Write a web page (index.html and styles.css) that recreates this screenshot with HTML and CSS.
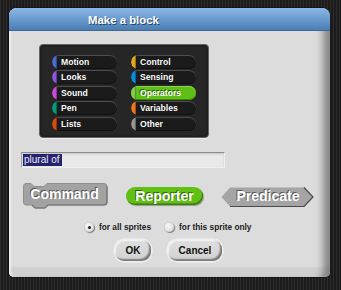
FILE: index.html
```html
<!DOCTYPE html>
<html>
<head>
<meta charset="utf-8">
<link rel="stylesheet" href="styles.css">
</head>
<body>
<div class="dialog">
  <div class="titlebar"><span class="title">Make a block</span></div>
  <div class="content">
    <div class="palette">
      <div class="cat"><span class="cap" style="background:#4a6cd4"></span>Motion</div>
      <div class="cat"><span class="cap" style="background:#e6a822"></span>Control</div>
      <div class="cat"><span class="cap" style="background:#8f56e3"></span>Looks</div>
      <div class="cat"><span class="cap" style="background:#0494dc"></span>Sensing</div>
      <div class="cat"><span class="cap" style="background:#cf4ad9"></span>Sound</div>
      <div class="cat selected"><span class="cap" style="background:#86cf4e"></span>Operators</div>
      <div class="cat"><span class="cap" style="background:#00a178"></span>Pen</div>
      <div class="cat"><span class="cap" style="background:#f3761d"></span>Variables</div>
      <div class="cat"><span class="cap" style="background:#d94d11"></span>Lists</div>
      <div class="cat"><span class="cap" style="background:#969696"></span>Other</div>
    </div>
    <div class="input"><span class="sel">plural of</span></div>
    <div class="types">
      <div class="shape command">
        <svg width="85" height="26" viewBox="0 0 85 26">
          <path d="M3,0.5 H8 L11,3.5 H21 L24,0.5 H81 Q84,0.5 84,3.5 V19 Q84,22 81,22 H25 L22,25 H12 L9,22 H3 Q0.5,22 0.5,19 V3.5 Q0.5,0.5 3,0.5 Z" fill="#a2a2a2" stroke="#8e8e8e" stroke-width="1"/>
          <path d="M84,3.5 V19 Q84,22 81,22 H25 L22,25 H12 L9,22" fill="none" stroke="#6f6f6f" stroke-width="1.2"/>
        </svg>
        <span class="shape-label">Command</span>
      </div>
      <div class="shape reporter"><span class="shape-label">Reporter</span></div>
      <div class="shape predicate">
        <svg width="93" height="20" viewBox="0 0 93 20">
          <path d="M9,0.5 H83 L92,10 L83,19.5 H9 L0.5,10 Z" fill="#a5a5a5"/>
          <path d="M83,0.5 L92,10 L83,19.5 H9" fill="none" stroke="#4a4a4a" stroke-width="1.2"/>
        </svg>
        <span class="shape-label">Predicate</span>
      </div>
    </div>
    <div class="radios">
      <div class="radio"><span class="dot on"></span><span class="rlabel">for all sprites</span></div>
      <div class="radio"><span class="dot"></span><span class="rlabel">for this sprite only</span></div>
    </div>
    <div class="buttons">
      <div class="btn ok"><span class="btn-in">OK</span></div>
      <div class="btn cancel"><span class="btn-in">Cancel</span></div>
    </div>
  </div>
</div>
</body>
</html>
```
FILE: styles.css
```css
html, body {
  margin: 0;
  padding: 0;
}
body {
  width: 341px;
  height: 290px;
  overflow: hidden;
  background: repeating-linear-gradient(90deg, #2c2c2c 0 1.5px, #1c1c1c 1.5px 3px);
  font-family: "Liberation Sans", Arial, sans-serif;
  padding: 8px 0 0 9px;
  box-sizing: border-box;
}
.dialog {
  width: 321px;
  height: 269px;
  border-radius: 8px 8px 5px 5px;
  background: #dcdcdc;
  box-shadow:
    inset 3px 0 2px -1px #efefef,
    inset -12px 0 7px -5px rgba(0,0,0,0.38),
    inset 0 -9px 0 -1px #d0d0d0,
    inset 0 -10px 3px -1px rgba(0,0,0,0.08),
    0 0 0 1px rgba(0,0,0,0.35);
  overflow: hidden;
  display: flex;
  flex-direction: column;
}
.titlebar {
  height: 23px;
  background: linear-gradient(#8ab7e4, #6a9bcf 50%, #4b7db3);
  border-bottom: 1px solid #3f6a98;
  box-sizing: border-box;
  display: flex;
  align-items: center;
  padding-left: 79px;
}
.title {
  color: #fff;
  font-weight: bold;
  font-size: 11.4px;
  text-shadow: 1px 1px 0 rgba(20, 40, 70, 0.75);
  margin-top: 1px;
}
.content {
  display: flex;
  flex-direction: column;
}
.palette {
  margin: 13px 0 0 30px;
  width: 170px;
  height: 94px;
  box-sizing: border-box;
  background: #262626;
  border: 1px solid #626262;
  border-radius: 4px;
  box-shadow: inset 0 0 3px rgba(0,0,0,0.6), 0 1px 1px rgba(255,255,255,0.5);
  padding: 9.5px 12px 0 12px;
  display: grid;
  grid-template-columns: 65px 65px;
  column-gap: 14px;
  row-gap: 1.6px;
  align-content: start;
}
.cat {
  height: 14px;
  border-radius: 7px;
  background: #1b1b1b;
  box-shadow: inset 0 1px 0 #4e4e4e, inset 0 -1px 0 #111;
  display: flex;
  align-items: center;
  color: #fff;
  font-weight: bold;
  font-size: 8.6px;
  text-shadow: -0.5px -0.5px 0 #000;
  overflow: hidden;
}
.cat .cap {
  width: 5px;
  height: 14px;
  border-radius: 5px 0 0 5px / 7px 0 0 7px;
  margin-right: 4px;
  flex: none;
  box-shadow: inset -1px 0 1px rgba(0,0,0,0.35);
}
.cat.selected {
  background: #5fbf17;
  box-shadow: inset 0 1px 0 #8ad655, inset 0 -1px 0 #3f8a0a;
  text-shadow: -1px -1px 0 #2a5a05;
}
.input {
  margin: 14px 0 0 12px;
  width: 204px;
  height: 16px;
  box-sizing: border-box;
  background: #e9e9e9;
  border-top: 1px solid #8c8c8c;
  border-left: 1px solid #a0a0a0;
  border-right: 1px solid #f0f0f0;
  border-bottom: 1px solid #f0f0f0;
  box-shadow: inset 0 1px 2px rgba(0,0,0,0.15);
  padding: 1px 0 0 1px;
  display: flex;
  align-items: flex-start;
}
.sel {
  background: #24246c;
  color: #e8e8ff;
  font-size: 10px;
  line-height: 12px;
  padding: 0 2px 0 1px;
}
.types {
  margin-top: 15px;
  padding-left: 14px;
  display: flex;
  align-items: flex-start;
  height: 26px;
}
.shape {
  position: relative;
  display: flex;
  align-items: center;
  justify-content: center;
  color: #fff;
  font-weight: bold;
  font-size: 14px;
  text-shadow: -1px -1px 0 rgba(0,0,0,0.5);
}
.shape svg {
  display: block;
}
.shape-label {
  position: absolute;
  left: 0;
  right: 0;
  text-align: center;
}
.command {
  width: 85px;
  height: 26px;
}
.command .shape-label {
  top: 3px;
  line-height: 17px;
  left: -2px;
}
.reporter {
  margin: 4px 0 0 18px;
  width: 77px;
  height: 18px;
  border-radius: 9px;
  background: #60c013;
  box-shadow: inset -1px -1.5px 0 #3a7d08, 1px 1px 1px rgba(0,0,0,0.3);
}
.reporter .shape-label {
  line-height: 18px;
  top: 0;
}
.predicate {
  margin: 4px 0 0 18px;
  width: 93px;
  height: 20px;
}
.predicate .shape-label {
  top: 0;
  line-height: 19px;
  left: 1px;
}
.radios {
  margin-top: 11px;
  padding-left: 75px;
  display: flex;
  align-items: center;
  gap: 13px;
  height: 14px;
}
.radio {
  display: flex;
  align-items: center;
  gap: 5px;
}
.dot {
  width: 10px;
  height: 10px;
  border-radius: 50%;
  box-sizing: border-box;
  background: radial-gradient(circle at 40% 35%, #f6f6f6, #d6d6d6);
  box-shadow: 1px 1px 1px rgba(0,0,0,0.45), inset 0 0 0 0.5px #bbb;
  display: flex;
  align-items: center;
  justify-content: center;
}
.dot.on::after {
  content: "";
  width: 3px;
  height: 3px;
  border-radius: 50%;
  background: #222;
}
.rlabel {
  font-size: 8.3px;
  font-weight: bold;
  color: #222;
}
.buttons {
  margin-top: 4px;
  padding-left: 104px;
  display: flex;
  gap: 13px;
}
.btn {
  height: 25px;
  box-sizing: border-box;
  padding: 2px;
  border-radius: 11px;
  background: #eeeeee;
  box-shadow: inset 0 0 1px rgba(0,0,0,0.2);
  display: flex;
}
.btn.ok { width: 40px; }
.btn.cancel { width: 58px; }
.btn-in {
  flex: 1;
  border-radius: 9px;
  background: linear-gradient(#dedede, #d2d2d2);
  box-shadow: inset -2px -2px 1.5px #7a7a7a, inset 1px 1px 1px #f4f4f4;
  display: flex;
  align-items: center;
  justify-content: center;
  font-weight: bold;
  font-size: 10px;
  color: #111;
  padding-bottom: 1px;
}
```
